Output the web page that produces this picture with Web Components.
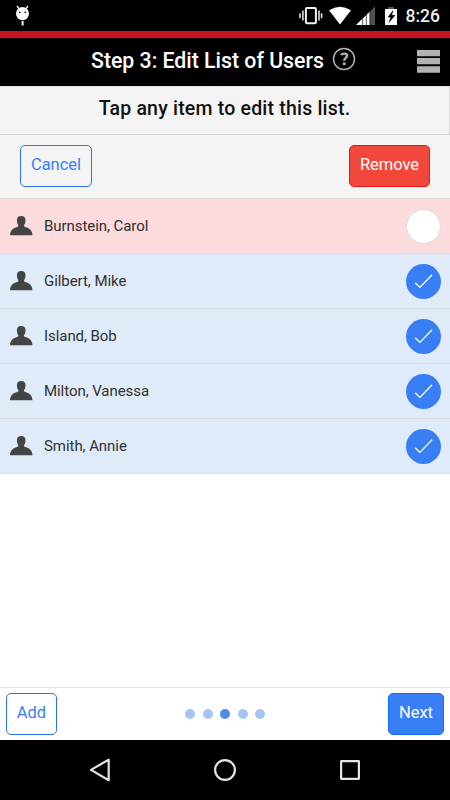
<!DOCTYPE html>
<html lang="en"><head><meta charset="utf-8"><title>Edit List of Users</title>
<style>
body{margin:0;background:#fff;font-family:Roboto,"Noto Sans",sans-serif}
</style></head><body>
<user-list-app></user-list-app>
<script>
const define=(name,html)=>customElements.define(name,class extends HTMLElement{
  constructor(){super();this.attachShadow({mode:'open'}).innerHTML=html;}
});

define('status-bar',`<style>
:host{display:flex;height:31px;background:#000;color:#fff;box-sizing:border-box;justify-content:space-between}
svg{display:block}.r{display:flex}
span{width:44.5px;font-size:17.5px;font-weight:500;line-height:33px;color:#eee;white-space:nowrap;letter-spacing:0}
</style>
<svg width="40" height="31" fill="#fff"><ellipse cx="22.5" cy="13.7" rx="6.5" ry="6.6"/><path d="M17 6l3 4M28 6l-3 4" stroke="#fff" stroke-width="1.3"/><rect x="21.5" y="21" width="2.2" height="4.5" fill="#ddd"/><circle cx="19.7" cy="12.4" r=".8" fill="#000"/><circle cx="25.3" cy="12.4" r=".8" fill="#000"/></svg>
<div class="r"><svg width="106.5" height="31" viewBox="299 0 106.5 31">
<rect x="305.9" y="7.9" width="10" height="15.4" rx="1" fill="none" stroke="#f2f2f2" stroke-width="2"/>
<path d="M302.9 10.5v10M319 10.5v10M300 13.2v5M321.6 13.2v5" stroke="#ddd" stroke-width="1.6"/>
<path d="M329 10.3Q340 3 351 10.3L340 24.6z" fill="#fff"/>
<path d="M375 6.5V25H356z" fill="#505050"/><path d="M370 11.4V25H356z" fill="#fff"/><path d="M362.7 18v7M366.3 15v10M369.8 12v13" stroke="#000" stroke-width=".65"/>
<path d="M388 7h6v2h-6z" fill="#555"/><path d="M385 9h12v16h-12z" fill="#fff"/><path d="M393 10.8l-5 6.3h3l-2 5.2 6-7h-3.5z" fill="#000" stroke="#000" stroke-width=".6"/>
</svg><span>8:26</span></div>`);

define('title-bar',`<style>
:host{display:flex;height:55px;box-sizing:border-box;border-top:7px solid #c81224;background:#000;color:#fff;padding:0 10px 0 91px;justify-content:space-between}
div{display:flex;gap:8px}
h1{margin:0;font-size:21.3px;font-weight:500;line-height:46px;width:233px;white-space:nowrap;letter-spacing:-.015px}
svg{display:block}
.q{margin-top:9px}.m{margin-top:12px}
</style><div><h1><slot></slot></h1>
<svg class="q" width="24" height="24" fill="none" stroke="#b2b2b2"><circle cx="12" cy="12" r="10.5" stroke-width="1.5"/><path d="M9 7.9C10 6.4 15.1 5.600 15.1 8.700c0 2.200-2.900 2.400-2.900 5.100" stroke-width="2.400"/><path d="M10.900 15.400h2.700v2.700h-2.700z" fill="#b2b2b2" stroke="none"/></svg></div>
<svg class="m" width="23" height="23" fill="#b2b2b2"><path d="M0 0h23v6.300H0zM0 8h23v6.300H0zM0 16.200h23v6.500H0z"/></svg>`);

define('hint-bar',`<style>
:host{display:block;height:49px;box-sizing:border-box;background:#f4f4f4;border-top:1px solid #e4e4e4;border-bottom:1px solid #d6d6d6;border-right:1px solid #d8d8d8;text-align:center;font-size:19.5px;font-weight:500;line-height:43px;color:#111;letter-spacing:.2px;white-space:nowrap}
</style><slot></slot>`);

define('app-button',`<style>
:host{display:block;box-sizing:border-box;width:var(--w);height:42px;border:1px solid #2b70f3;border-radius:5px;background:#fff;color:#387ef5;font-size:16.5px;line-height:37px;text-align:center;white-space:nowrap;letter-spacing:-.03px}
:host([kind=clear]){background:transparent}
:host([kind=danger]){background:#f1483b;border-color:#ea1612;color:#fff}
:host([kind=primary]){background:#387ef5;border-color:#126cff;color:#fff}
</style><slot></slot>`);

define('action-bar',`<style>
:host{display:flex;height:63px;box-sizing:border-box;background:#f4f4f4;padding:10px 20px 0;justify-content:space-between}
</style><slot></slot>`);

define('user-row',`<style>
:host{display:flex;height:55px;box-sizing:border-box;background:#e0ebf9;border-top:1px solid #d9dce2;align-items:center;padding:0 9px 0 10px;color:#303030}
:host([removed]){background:#fbdbde;border-top-color:#ddd5d6}
.n{flex:1;margin-left:11px;font-size:15px;letter-spacing:-.06px;line-height:20px;padding-bottom:1px}
svg{display:block}.c{display:none}:host([removed]) .c{display:block}:host([removed]) .k{display:none}
</style><svg class="p" width="23" height="22" viewBox="0 0 23 22"><path d="M11.200 1C8.100 1 6.800 3 6.900 5.800c.1 2.200 .7 3.400 1.500 4.400 .2 1.100-.6 1.500-2.100 2C2.800 13.400 .2 15.400 0 20.300H22.500c-.2-4.900-2.800-6.900-6.400-8.100-1.500-.5-2.300-.9-2.100-2 .8-1 1.400-2.200 1.500-4.400C15.700 3 14.300 1 11.200 1z" fill="#444"/></svg>
<span class="n"><slot></slot></span>
<svg class="k" width="35" height="35"><circle cx="17.500" cy="17.500" r="17.500" fill="#387ef5"/><path d="M9.200 18.700l4.700 4.700 12.200-12.600" fill="none" stroke="#fff" stroke-width="1.300"/></svg>
<svg class="c" width="35" height="35"><circle cx="17.500" cy="17.500" r="16.900" fill="#fff" stroke="#ddd"/></svg>`);

define('page-dots',`<style>
:host{display:flex;gap:7.500px;margin-top:16px}
i{width:10px;height:10px;border-radius:50%;background:#a4c5f1}i.on{background:#4a8de6}
</style><i></i><i></i><i class="on"></i><i></i><i></i>`);

define('step-footer',`<style>
:host{display:grid;grid-template-columns:1fr auto 1fr;height:53px;box-sizing:border-box;border-top:1px solid #e6e6e6;background:#fff;padding:4.500px 6px 0}
::slotted([kind=primary]){justify-self:end}
</style><slot></slot>`);

define('nav-bar',`<style>
:host{display:flex;height:60px;background:#000;justify-content:center;align-items:center;gap:101px}
svg{display:block}
</style><svg width="24" height="24" fill="none" stroke="#e4e4e4" stroke-width="2.200"><path d="M20.700 1.600v20.600L3 11.900z" stroke-linejoin="round"/></svg>
<svg width="24" height="24" fill="none" stroke="#e4e4e4" stroke-width="2.200"><circle cx="12" cy="12" r="9.900"/></svg>
<svg width="24" height="24" fill="none" stroke="#e4e4e4" stroke-width="2.200"><rect x="3.100" y="3.100" width="17.800" height="17.800" rx=".3"/></svg>`);

define('user-list-app',`<style>
:host{display:flex;flex-direction:column;width:450px;height:800px;overflow:hidden}
main{flex:1;display:flex;flex-direction:column}
section{border-bottom:1px solid #d9dce2}
</style>
<status-bar></status-bar><title-bar>Step 3: Edit List of Users</title-bar>
<hint-bar>Tap any item to edit this list.</hint-bar>
<main><action-bar><app-button kind="clear" style="--w:72px">Cancel</app-button><app-button kind="danger" style="--w:81px">Remove</app-button></action-bar>
<section><user-row removed>Burnstein, Carol</user-row><user-row>Gilbert, Mike</user-row><user-row>Island, Bob</user-row><user-row>Milton, Vanessa</user-row><user-row>Smith, Annie</user-row></section></main>
<step-footer><app-button style="--w:51px">Add</app-button><page-dots></page-dots><app-button kind="primary" style="--w:56px">Next</app-button></step-footer>
<nav-bar></nav-bar>`);
</script></body></html>
